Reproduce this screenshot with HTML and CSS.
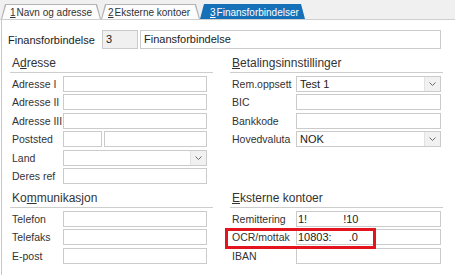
FILE: index.html
```html
<!DOCTYPE html>
<html lang="no">
<head>
    <meta charset="UTF-8">
    <meta name="viewport" content="width=device-width, initial-scale=1.0">
    <title>Finansforbindelser</title>
    <link rel="stylesheet" href="styles.css">
</head>
<body>
    <div class="tabbar">
        <div class="tab t1"><u>1</u>Navn og adresse</div>
        <div class="tab t2"><u>2</u>Eksterne kontoer</div>
        <div class="tab t3 active"><u>3</u>Finansforbindelser</div>
    </div>

    <div class="panel">
        <div class="top">
            <span class="top-label">Finansforbindelse</span>
            <div class="field code">3</div>
            <div class="field name">Finansforbindelse</div>
        </div>

        <div class="columns">
            <!-- Adresse -->
            <section class="group left">
                <h3>A<u>d</u>resse</h3>
                <div class="rows">
                    <div class="row"><span>Adresse I</span><div class="field"></div></div>
                    <div class="row"><span>Adresse II</span><div class="field"></div></div>
                    <div class="row"><span>Adresse III</span><div class="field"></div></div>
                    <div class="row"><span>Poststed</span>
                        <div class="split"><div class="field"></div><div class="field"></div></div>
                    </div>
                    <div class="row"><span>Land</span>
                        <div class="field select"><span class="val"></span><i class="drop"><svg width="7" height="4" viewBox="0 0 7 4"><path d="M0.5 0.5 L3.5 3.5 L6.5 0.5"/></svg></i></div>
                    </div>
                    <div class="row"><span>Deres ref</span><div class="field"></div></div>
                </div>
            </section>

            <!-- Betalingsinnstillinger -->
            <section class="group right">
                <h3><u>B</u>etalingsinnstillinger</h3>
                <div class="rows">
                    <div class="row"><span>Rem.oppsett</span>
                        <div class="field select"><span class="val">Test 1</span><i class="drop"><svg width="7" height="4" viewBox="0 0 7 4"><path d="M0.5 0.5 L3.5 3.5 L6.5 0.5"/></svg></i></div>
                    </div>
                    <div class="row"><span>BIC</span><div class="field"></div></div>
                    <div class="row"><span>Bankkode</span><div class="field"></div></div>
                    <div class="row"><span>Hovedvaluta</span>
                        <div class="field select"><span class="val">NOK</span><i class="drop"><svg width="7" height="4" viewBox="0 0 7 4"><path d="M0.5 0.5 L3.5 3.5 L6.5 0.5"/></svg></i></div>
                    </div>
                </div>
            </section>

            <!-- Kommunikasjon -->
            <section class="group left">
                <h3>Ko<u>m</u>munikasjon</h3>
                <div class="rows">
                    <div class="row"><span>Telefon</span><div class="field"></div></div>
                    <div class="row"><span>Telefaks</span><div class="field"></div></div>
                    <div class="row"><span>E-post</span><div class="field"></div></div>
                </div>
            </section>

            <!-- Eksterne kontoer -->
            <section class="group right">
                <h3><u>E</u>ksterne kontoer</h3>
                <div class="rows">
                    <div class="row"><span>Remittering</span>
                        <div class="field acct"><span>1!</span><span class="gap-a">!10</span></div>
                    </div>
                    <div class="row"><span>OCR/mottak</span>
                        <div class="field acct"><span>10803:</span><span class="gap-b">.0</span></div>
                    </div>
                    <div class="row"><span>IBAN</span><div class="field"></div></div>
                </div>
            </section>
        </div>
    </div>

    <div class="mark"></div>
</body>
</html>
```

FILE: styles.css
```css
body {
    margin: 0;
    font-family: "Liberation Sans", Arial, sans-serif;
    font-size: 11px;
    color: #333;
    background: #fff;
}
u {
    text-decoration: underline;
    text-underline-offset: 1px;
}

/* tabs */
.tabbar {
    display: flex;
    align-items: flex-end;
    height: 19px;
    padding-left: 1px;
    background: #f0f0f0;
    border-bottom: 1px solid #cfcfcf;
}
.tab {
    position: relative;
    z-index: 0;
    box-sizing: border-box;
    height: 15px;
    padding-top: 2px;
    font-size: 10px;
    line-height: 13px;
    color: #333;
    white-space: nowrap;
}
.tab::before,
.tab::after {
    content: "";
    position: absolute;
    inset: 0;
    z-index: -1;
}
.tab::before {
    background: #b4b4b4;
    clip-path: polygon(4px 0, calc(100% - 4px) 0, 100% 100%, 0 100%);
}
.tab::after {
    background: #fcfcfc;
    clip-path: polygon(5.2px 1px, calc(100% - 5.2px) 1px, calc(100% - 1.1px) 100%, 1.1px 100%);
}
.tab u {
    margin-right: 1px;
}
.t1 { width: 100px; padding-left: 9px; }
.t2 { width: 99px; padding-left: 7px; }
.t3 { width: 105px; padding-left: 10px; }
.tab.active {
    color: #fff;
}
.tab.active::before,
.tab.active::after {
    background: #1670b7;
}

/* panel */
.panel {
    margin-left: 1px;
    min-height: 255px;
    border-left: 1px solid #c8c8c8;
}
.top {
    display: flex;
    align-items: center;
    padding: 10px 0 0 6px;
}
.top-label {
    width: 94px;
    color: #222;
}
.field {
    box-sizing: border-box;
    height: 16px;
    padding: 0 3px;
    border: 1px solid #cbcbcb;
    background: #fff;
    line-height: 14px;
    color: #222;
    white-space: nowrap;
    overflow: hidden;
}
.top .field {
    height: 19px;
    line-height: 17px;
}
.top .code {
    width: 36px;
    padding-left: 3px;
    background: #f0f0f0;
}
.top .name {
    width: 301px;
    margin-left: 2px;
}

.columns {
    display: grid;
    grid-template-columns: 203px 213px;
    column-gap: 17px;
    padding-left: 8px;
}
.group h3 {
    margin: 0;
    padding: 7px 0 1px 2px;
    font-size: 12px;
    font-weight: normal;
    line-height: 15px;
    color: #333;
    border-bottom: 1px solid #cdcdcd;
}
.rows {
    display: grid;
    row-gap: 2.4px;
    padding-top: 3px;
}
.row {
    display: grid;
    align-items: center;
    height: 16px;
    padding-left: 2px;
    line-height: 16px;
    white-space: nowrap;
}
.row > span {
    font-size: 10.5px;
}
.left .row { grid-template-columns: 51px 144px; }
.right .row { grid-template-columns: 64px 145px; }

.split {
    display: grid;
    grid-template-columns: 39px 1fr;
    column-gap: 2px;
}
.select {
    display: flex;
    padding-right: 0;
}
.select .val {
    flex: 1;
}
.drop {
    display: flex;
    align-items: center;
    justify-content: center;
    width: 15px;
    background: #f1f1f1;
    border-left: 1px solid #e2e2e2;
}
.drop svg path {
    fill: none;
    stroke: #6a6a6a;
    stroke-width: 1;
}
.acct { padding-left: 1px; }
.gap-a { margin-left: 36px; }
.gap-b { margin-left: 17px; }

/* annotation */
.mark {
    position: absolute;
    left: 225px;
    top: 228px;
    width: 151px;
    height: 21px;
    box-sizing: border-box;
    border: 3px solid #e4141f;
}
```
